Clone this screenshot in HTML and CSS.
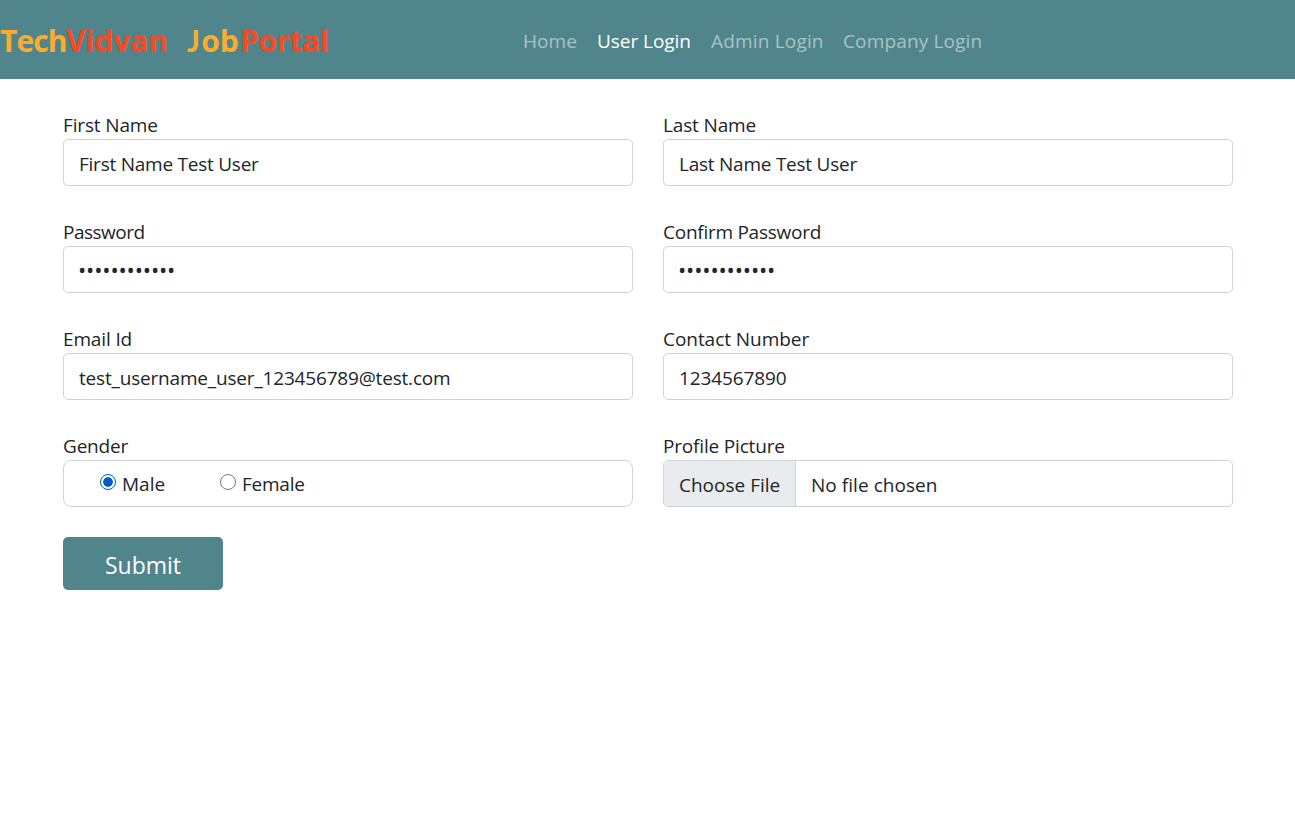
FILE: index.html
```html
<!DOCTYPE html>
<html lang="en">
<head>
<meta charset="utf-8">
<title>TechVidvan JobPortal</title>
<link rel="stylesheet" href="styles.css">
</head>
<body>
<header class="navbar">
  <a class="brand"><span class="gold tech">Tech</span><span class="red vidvan">Vidvan</span><span class="gold job"><span class="initial">J</span>ob</span><span class="red portal">Portal</span></a>
  <nav class="nav">
    <a class="nav-link home">Home</a>
    <a class="nav-link user active">User Login</a>
    <a class="nav-link admin">Admin Login</a>
    <a class="nav-link company">Company Login</a>
  </nav>
</header>
<form class="form">
  <div class="field"><label class="label">First Name</label><input class="control" type="text" value="First Name Test User"></div>
  <div class="field"><label class="label">Last Name</label><input class="control" type="text" value="Last Name Test User"></div>
  <div class="field"><label class="label tight">Password</label><div class="control dots">••••••••••••</div></div>
  <div class="field"><label class="label snug">Confirm Password</label><div class="control dots">••••••••••••</div></div>
  <div class="field"><label class="label">Email Id</label><input class="control email" type="text" value="test_username_user_123456789@test.com"></div>
  <div class="field"><label class="label even">Contact Number</label><input class="control number" type="text" value="1234567890"></div>
  <div class="field"><span class="label mild">Gender</span>
    <div class="control choices">
      <label class="choice male"><input class="radio" type="radio" name="gender" checked><span>Male</span></label>
      <label class="choice female"><input class="radio" type="radio" name="gender"><span>Female</span></label>
    </div>
  </div>
  <div class="field"><span class="label mild">Profile Picture</span>
    <div class="control file"><span class="file-button">Choose File</span><span class="file-name">No file chosen</span></div>
  </div>
  <button class="submit" type="button">Submit</button>
</form>
</body>
</html>
```
FILE: styles.css
```css
* { box-sizing: border-box; }
body {
  margin: 0;
  background: #fff;
  color: #212529;
  font: 400 19px/30px "Open Sans", "Noto Sans", sans-serif;
}
.navbar {
  display: flex;
  align-items: center;
  height: 79px;
  padding-top: 3px;
  background: #50868b;
}
.brand {
  display: flex;
  width: 513px;
  margin-top: -2px;
  font-size: 30px;
  font-weight: 700;
  line-height: 45px;
}
.gold { color: #fbab2e; }
.red { color: #f44a25; }
.tech { width: 66px; letter-spacing: -0.9px; }
.vidvan { width: 121px; letter-spacing: -0.1px; }
.job { width: 53px; letter-spacing: -0.2px; }
.initial { font-family: Lato, sans-serif; letter-spacing: 1.4px; }
.portal { letter-spacing: -0.5px; }
.nav { display: flex; }
.nav-link { padding: 0 10px; color: #a7c3c5; white-space: nowrap; }
.home { width: 74px; letter-spacing: 0.05px; }
.user { width: 114px; letter-spacing: -0.05px; }
.admin { width: 132px; letter-spacing: 0.18px; }
.company { letter-spacing: 0.15px; }
.active { color: #fff; }

.form {
  display: grid;
  grid-template-columns: 570px 570px;
  gap: 30px;
  padding: 30px 62px 0 63px;
}
.field { display: flex; flex-direction: column; }
.label { height: 30px; padding-top: 1px; letter-spacing: -0.14px; }
.tight { letter-spacing: -0.5px; }
.snug { letter-spacing: -0.26px; }
.mild { letter-spacing: -0.18px; }
.even { letter-spacing: -0.05px; }
.control {
  width: 100%;
  height: 47px;
  padding: 2px 15px 0;
  border: 1px solid #ced4da;
  border-radius: 5px;
  background: #fff;
  color: #212529;
  font: inherit;
  letter-spacing: -0.24px;
  outline: 0;
}
.email { letter-spacing: -0.18px; }
.number { letter-spacing: -0.1px; }
.dots {
  padding: 7px 14px 0;
  font-size: 22px;
  letter-spacing: -0.17px;
}
.choices { display: flex; padding: 0; border-radius: 8px; }
.choice {
  display: flex;
  align-items: flex-start;
  gap: 6px;
  padding: 8px 0 0 36px;
  line-height: 30px;
}
.male { width: 120px; letter-spacing: 0; }
.radio {
  appearance: none;
  flex: none;
  width: 16px;
  height: 16px;
  margin: 5px 0 0;
  border: 1px solid #767676;
  border-radius: 50%;
  background: #fff;
}
.radio:checked {
  border-color: #005cc8;
  background: radial-gradient(circle, #005cc8 4.4px, #fff 5.2px);
}
.file { display: flex; padding: 0; overflow: hidden; line-height: 49px; }
.file-button {
  width: 132px;
  padding-left: 15px;
  border-right: 1px solid #ced4da;
  background: #e9ecef;
  letter-spacing: 0;
}
.file-name { padding-left: 15px; letter-spacing: 0.05px; }
.submit {
  width: 160px;
  height: 53px;
  padding: 2px 0 0;
  border: 0;
  border-radius: 5px;
  background: #50868b;
  color: #fff;
  font: 400 23px/36px "Open Sans", "Noto Sans", sans-serif;
}
```
